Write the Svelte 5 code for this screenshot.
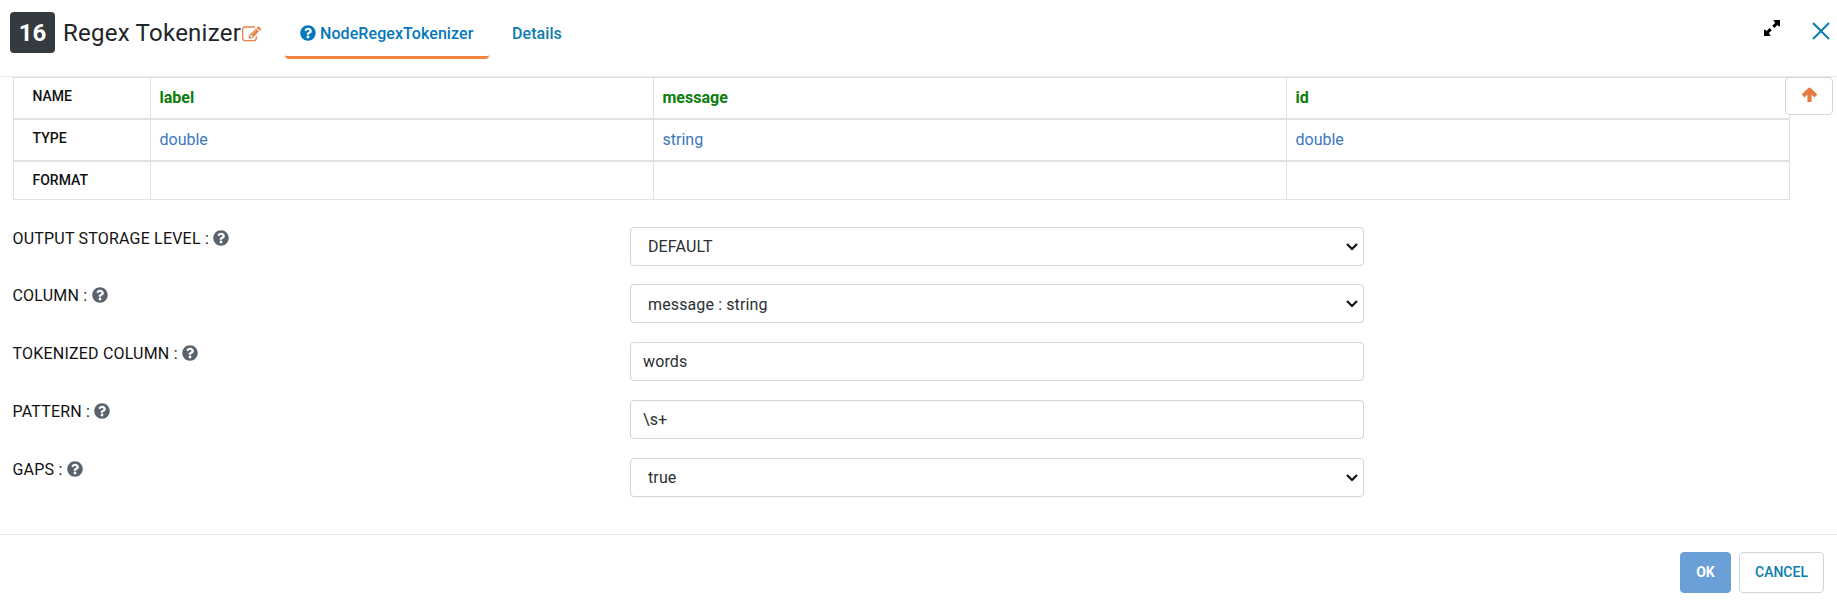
<script>
  const columns = [
    { name: 'label', type: 'double' },
    { name: 'message', type: 'string' },
    { name: 'id', type: 'double' }
  ];
  const fields = [
    { label: 'OUTPUT STORAGE LEVEL', value: 'DEFAULT', select: true },
    { label: 'COLUMN', value: 'message : string', select: true },
    { label: 'TOKENIZED COLUMN', value: 'words' },
    { label: 'PATTERN', value: '\\s+' },
    { label: 'GAPS', value: 'true', select: true }
  ];
</script>

{#snippet help()}
  <svg class="help" viewBox="0 0 512 512" aria-hidden="true"><path fill="currentColor" d="M504 256c0 137-111 248-248 248S8 393 8 256 119 8 256 8s248 111 248 248zM262.700 90c-54.500 0-89.300 23-116.500 63.800-3.500 5.300-2.400 12.400 2.700 16.300l34.700 26.300c5.200 3.900 12.600 3 16.700-2.100 17.900-22.700 30.100-35.800 57.300-35.800 20.400 0 45.700 13.100 45.700 33 0 15-12.400 22.700-32.500 34C247.100 238.500 216 254.900 216 296v4c0 6.600 5.400 12 12 12h56c6.600 0 12-5.400 12-12v-1.300c0-28.500 83.200-29.600 83.200-106.700 0-58-60.200-102-116.500-102zM256 338c-25.400 0-46 20.600-46 46s20.600 46 46 46 46-20.600 46-46-20.600-46-46-46z"/></svg>
{/snippet}

<div class="dialog">
  <header>
    <span class="badge">16</span>
    <h1>Regex Tokenizer</h1>
    <svg class="edit" viewBox="0 0 1792 1792" aria-hidden="true"><path fill="currentColor" d="M888 1184l116-116-152-152-116 116v56h96v96h56zm440-720q-16-16-33 1l-350 350q-17 17-1 33t33-1l350-350q17-17 1-33zm80 594v190q0 119-84.500 203.500t-203.500 84.500h-832q-119 0-203.500-84.500t-84.500-203.500v-832q0-119 84.500-203.500t203.500-84.500h832q63 0 117 25 15 7 18 23 3 17-9 29l-49 49q-14 14-32 8-23-6-45-6h-832q-66 0-113 47t-47 113v832q0 66 47 113t113 47h832q66 0 113-47t47-113v-126q0-13 9-22l64-64q15-15 35-7t20 29zm-96-738l288 288-672 672h-288v-288zm444 132l-92 92-288-288 92-92q28-28 68-28t68 28l152 152q28 28 28 68t-28 68z"/></svg>
    <nav>
      <a class="tab active" href="#node">{@render help()}NodeRegexTokenizer</a>
      <a class="tab" href="#details">Details</a>
    </nav>
    <svg class="expand" viewBox="0 0 16 16" aria-hidden="true"><path fill="#000" d="M10 0h5.500l.5.500V6l-1 .5-1.600-1.600-3 3-2.100-2.100 3-3L9.500 1zM6 16H.5l-.5-.5V10l1-.5 1.600 1.600 3-3 2.100 2.100-3 3L6.500 15z"/></svg>
    <svg class="close" viewBox="0 0 18 18" aria-hidden="true"><path d="M1 1l16 16M17 1L1 17" fill="none" stroke="#0a7db0" stroke-width="2"/></svg>
  </header>

  <main>
    <button class="up" aria-label="Up"><svg viewBox="0 0 16 16"><path d="M8 14V3M2 8.500l6-6 6 6" fill="none" stroke="#e27c3e" stroke-width="3.900" stroke-linejoin="round"/></svg></button>
    <table>
      <tbody>
        <tr><th>NAME</th>{#each columns as c}<td class="name">{c.name}</td>{/each}</tr>
        <tr><th>TYPE</th>{#each columns as c}<td>{c.type}</td>{/each}</tr>
        <tr><th>FORMAT</th>{#each columns as c}<td></td>{/each}</tr>
      </tbody>
    </table>

    <form>
      {#each fields as f}
        <div class="row">
          <div class="label">{f.label} : {@render help()}</div>
          {#if f.select}
            <div class="select">
              <select aria-label={f.label}><option>{f.value}</option></select>
              <svg viewBox="0 0 12 8" aria-hidden="true"><path d="M1 1l5 5 5-5" fill="none" stroke="#111" stroke-width="2.200"/></svg>
            </div>
          {:else}
            <input type="text" aria-label={f.label} value={f.value} />
          {/if}
        </div>
      {/each}
    </form>
  </main>

  <footer>
    <button class="ok">OK</button>
    <button class="cancel">CANCEL</button>
  </footer>
</div>

<style>
  :global(body) { margin: 0; background: #fff; }
  .dialog, .dialog :global(*) { box-sizing: border-box; }
  .dialog {
    height: 606px;
    display: flex;
    flex-direction: column;
    overflow: hidden;
    font-family: Roboto, sans-serif;
    font-size: 16px;
    line-height: 24px;
    color: #212529;
  }
  header {
    height: 77px;
    flex: none;
    display: flex;
    align-items: flex-start;
    padding: 12px 7px 0 10px;
    border-bottom: 1px solid #e9ecef;
  }
  .badge {
    width: 45px;
    height: 41px;
    border-radius: 4px;
    background: #343a40;
    color: #fff;
    font-size: 24px;
    font-weight: 700;
    line-height: 42px;
    text-align: center;
  }
  h1 {
    margin: 0 0 0 8px;
    width: 179px;
    font-size: 24px;
    font-weight: 400;
    line-height: 42px;
    letter-spacing: 0.25px;
    white-space: nowrap;
  }
  .edit { width: 19px; height: 19px; margin-top: 13px; margin-left: -0.500px; color: #e8834a; }
  nav { display: flex; margin-left: 24.500px; }
  .tab {
    height: 47px;
    padding: 10px 16px 0;
    border-bottom: 3px solid transparent;
    border-radius: 4px;
    color: #0a7db0;
    font-weight: 500;
    letter-spacing: 0.08px;
    text-decoration: none;
    white-space: nowrap;
  }
  .tab.active { width: 204px; padding-left: 15px; border-color: #f58344; color: #0478bb; margin-right: 7px; }
  .help { width: 16px; height: 16px; vertical-align: -2px; }
  .tab .help { margin-right: 4px; }
  .expand { width: 16px; height: 16px; margin: 7.500px 32px 0 auto; }
  .close { width: 18px; height: 18px; margin-top: 10px; }
  main { position: relative; height: 457px; padding-left: 13px; }
  table {
    width: 1777px;
    border-collapse: separate;
    border-spacing: 0;
    table-layout: fixed;
    border-left: 1px solid #dee2e6;
  }
  th, td {
    height: 42px;
    padding: 0 0 1px 8.500px;
    border: 1px solid #dee2e6;
    border-left: 0;
    text-align: left;
    line-height: 24px;
  }
  tr:last-child th, tr:last-child td { height: 39px; }
  th { width: 137px; padding: 0 0 4px 18.500px; color: #111; font-size: 14px; font-weight: 500; }
  tr:last-child th { padding-bottom: 2px; }
  td { color: #3a78c0; }
  td:nth-child(2) { width: 503px; }
  td:nth-child(3) { width: 633px; }
  .name { color: #0b7d0b; font-weight: 700; }
  .up {
    position: absolute;
    left: 1785px;
    top: 0;
    width: 48px;
    height: 38px;
    padding: 0;
    border: 1px solid #ced4da;
    border-radius: 4px;
    background: #fff;
  }
  .up svg { width: 17px; height: 17px; display: block; margin: -2px auto 0; }
  form { padding-top: 26.700px; }
  .row { display: grid; grid-template-columns: 617px 734px; height: 57.750px; align-items: start; }
  .label { color: #111; margin-left: -0.500px; letter-spacing: 0.2px; }
  .select { position: relative; height: 39px; }
  .select svg { position: absolute; right: 6px; top: 16px; width: 12px; height: 8px; pointer-events: none; }
  input, select {
    display: block;
    width: 734px;
    height: 39px;
    margin: 0;
    padding: 6px 12px;
    border: 1px solid #ced4da;
    border-radius: 4px;
    background: #fff;
    color: #2b2f33;
    font: 400 16px/24px Roboto, sans-serif;
    letter-spacing: 0.12px;
  }
  select { appearance: none; padding: 7px 12px 5px 17px; }
  .label .help { color: #59636d; }
  footer {
    flex: 1;
    display: flex;
    justify-content: flex-end;
    align-items: flex-start;
    gap: 8px;
    padding: 17px 13px 0;
    border-top: 1px solid #e5e7e9;
  }
  footer button {
    height: 41px;
    padding: 0 0 1px;
    border: 1px solid #ced4da;
    border-radius: 4px;
    background: #fff;
    color: #0a7db0;
    font: 500 14px Roboto, sans-serif;
  }
  footer .ok { width: 51px; background: #6a9fd8; border-color: #6a9fd8; color: #fff; font-weight: 700; }
  footer .cancel { width: 85px; }
</style>
